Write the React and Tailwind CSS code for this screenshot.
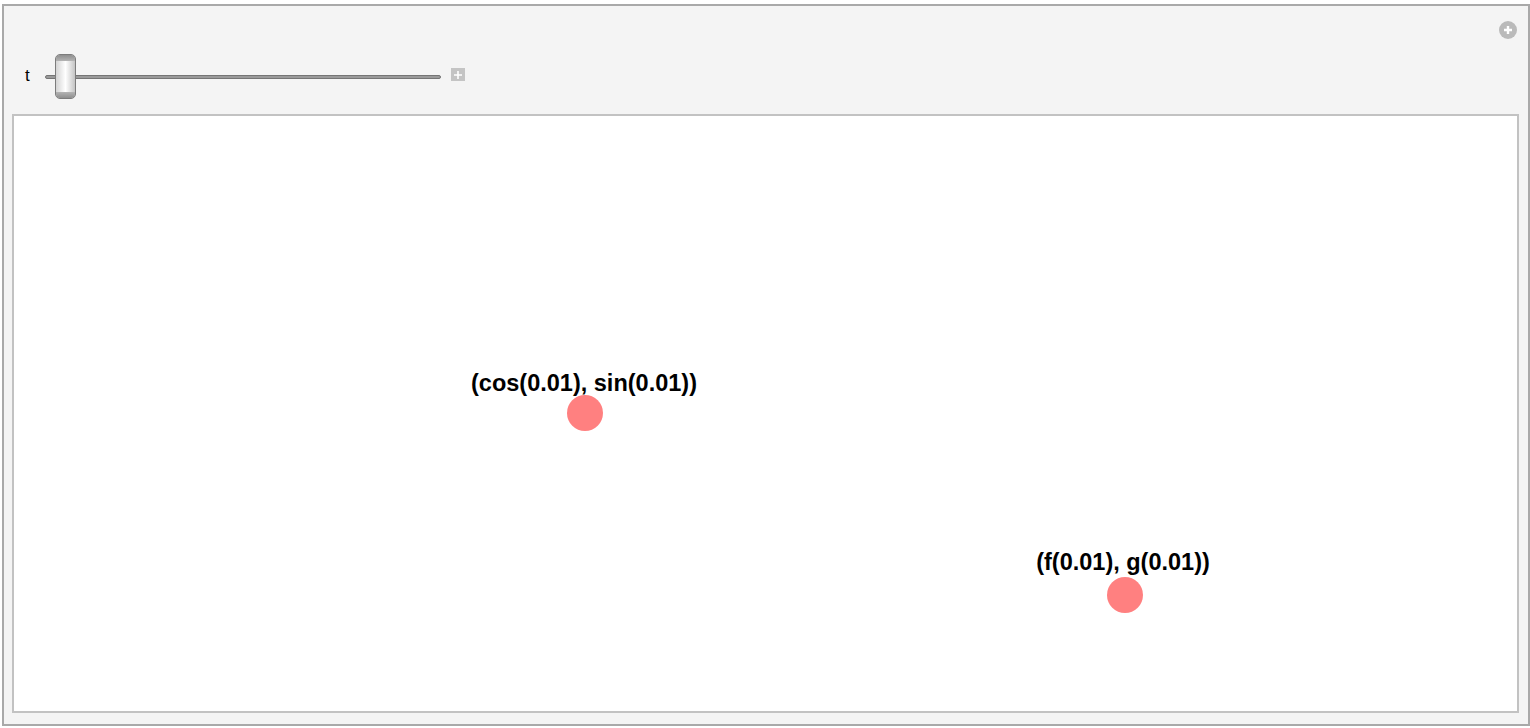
import React from 'react';

const points = [
    { label: '(cos(0.01), sin(0.01))', x: 571, y: 297, lx: 570, ly: 257 },
    { label: '(f(0.01), g(0.01))', x: 1111, y: 479, lx: 1109, ly: 436 },
];

const Slider = () => (
    <div className="relative w-[396px] h-[45px] flex items-center">
        <div className="w-full h-[4px] rounded-full bg-[#9a9a9a] border border-[#757575]" />
        <div className="absolute left-[10px] top-0 w-[21px] h-[45px] rounded-[5px] border border-[#7c7c7c] overflow-hidden flex flex-col bg-gradient-to-r from-[#d4d4d4] via-white to-[#c4c4c4]">
            <div className="h-[6px] bg-gradient-to-b from-[#8e8e8e] to-[#b4b4b4]" />
            <div className="flex-1" />
            <div className="h-[6px] bg-gradient-to-b from-[#b4b4b4] to-[#8e8e8e]" />
        </div>
    </div>
);

const App = () => {
    return (
        <div className="w-[1530px] h-[728px] bg-white pt-[4px] pl-[2px] font-['Liberation_Sans',Arial,sans-serif]">
            <div className="relative w-[1528px] h-[722px] border-2 border-[#a9a9a9] bg-[#f4f4f4] flex flex-col">
                <div className="absolute right-[11px] top-[15px] w-[18px] h-[18px] rounded-full bg-[#bababa] flex items-center justify-center">
                    <svg width="10" height="10" viewBox="0 0 10 10">
                        <path d="M5 1v8M1 5h8" stroke="#fff" strokeWidth="2.4" />
                    </svg>
                </div>

                <div className="h-[108px] pt-[48px] pl-[21px] flex items-start">
                    <div className="h-[45px] flex items-center">
                        <span className="text-[17px] leading-none text-black w-[20px] -mt-[3px]">t</span>
                        <Slider />
                        <div className="ml-[10px] w-[14px] h-[13px] bg-[#c4c4c4] flex items-center justify-center -mt-[4px]">
                            <svg width="10" height="10" viewBox="0 0 10 10">
                                <path d="M5 1v8M1 5h8" stroke="#fff" strokeWidth="1.6" />
                            </svg>
                        </div>
                    </div>
                </div>

                <div className="relative ml-[8px] w-[1507px] h-[599px] border-2 border-[#c2c2c2] bg-white">
                    {points.map((p) => (
                        <React.Fragment key={p.label}>
                            <div
                                className="absolute -translate-x-1/2 whitespace-nowrap text-[23.5px] leading-[20px] font-bold text-black"
                                style={{ left: p.lx, top: p.ly }}
                            >
                                {p.label}
                            </div>
                            <div
                                className="absolute w-[36px] h-[36px] -ml-[18px] -mt-[18px] rounded-full bg-[#ff8080]"
                                style={{ left: p.x, top: p.y }}
                            />
                        </React.Fragment>
                    ))}
                </div>
            </div>
        </div>
    );
};

export default App;
